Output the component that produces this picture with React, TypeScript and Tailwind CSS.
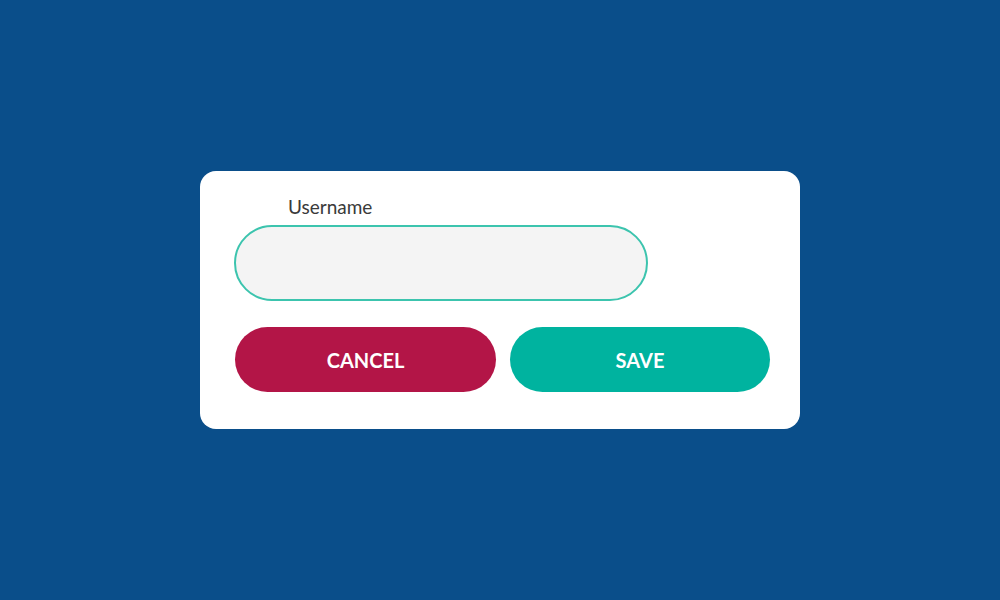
export default function App() {
  return (
    <div className="flex h-[600px] w-full items-center justify-center bg-[#0a4e8a] font-['Lato','Liberation_Sans',sans-serif]">
      <div className="flex w-[600px] flex-col rounded-[16px] bg-white pb-[37px] pl-[34px] pr-[30px] pt-[24px]">
        <label className="ml-[54px] mb-[6px] block h-[24px] text-[19px] leading-[24px] text-[#3a3a3a]">Username</label>
        <input
          type="text"
          className="h-[76px] w-[414px] rounded-full border-2 border-[#3cc4ae] bg-[#f4f4f4] px-6 text-[18px] outline-none"
        />
        <div className="mt-[26px] flex gap-[14px] pl-[1px]">
          <button className="h-[65px] w-[261px] rounded-full bg-[#b31547] text-[20px] font-bold text-white">
            CANCEL
          </button>
          <button className="h-[65px] w-[260px] rounded-full bg-[#00b39f] text-[20px] font-bold text-white">
            SAVE
          </button>
        </div>
      </div>
    </div>
  );
}
